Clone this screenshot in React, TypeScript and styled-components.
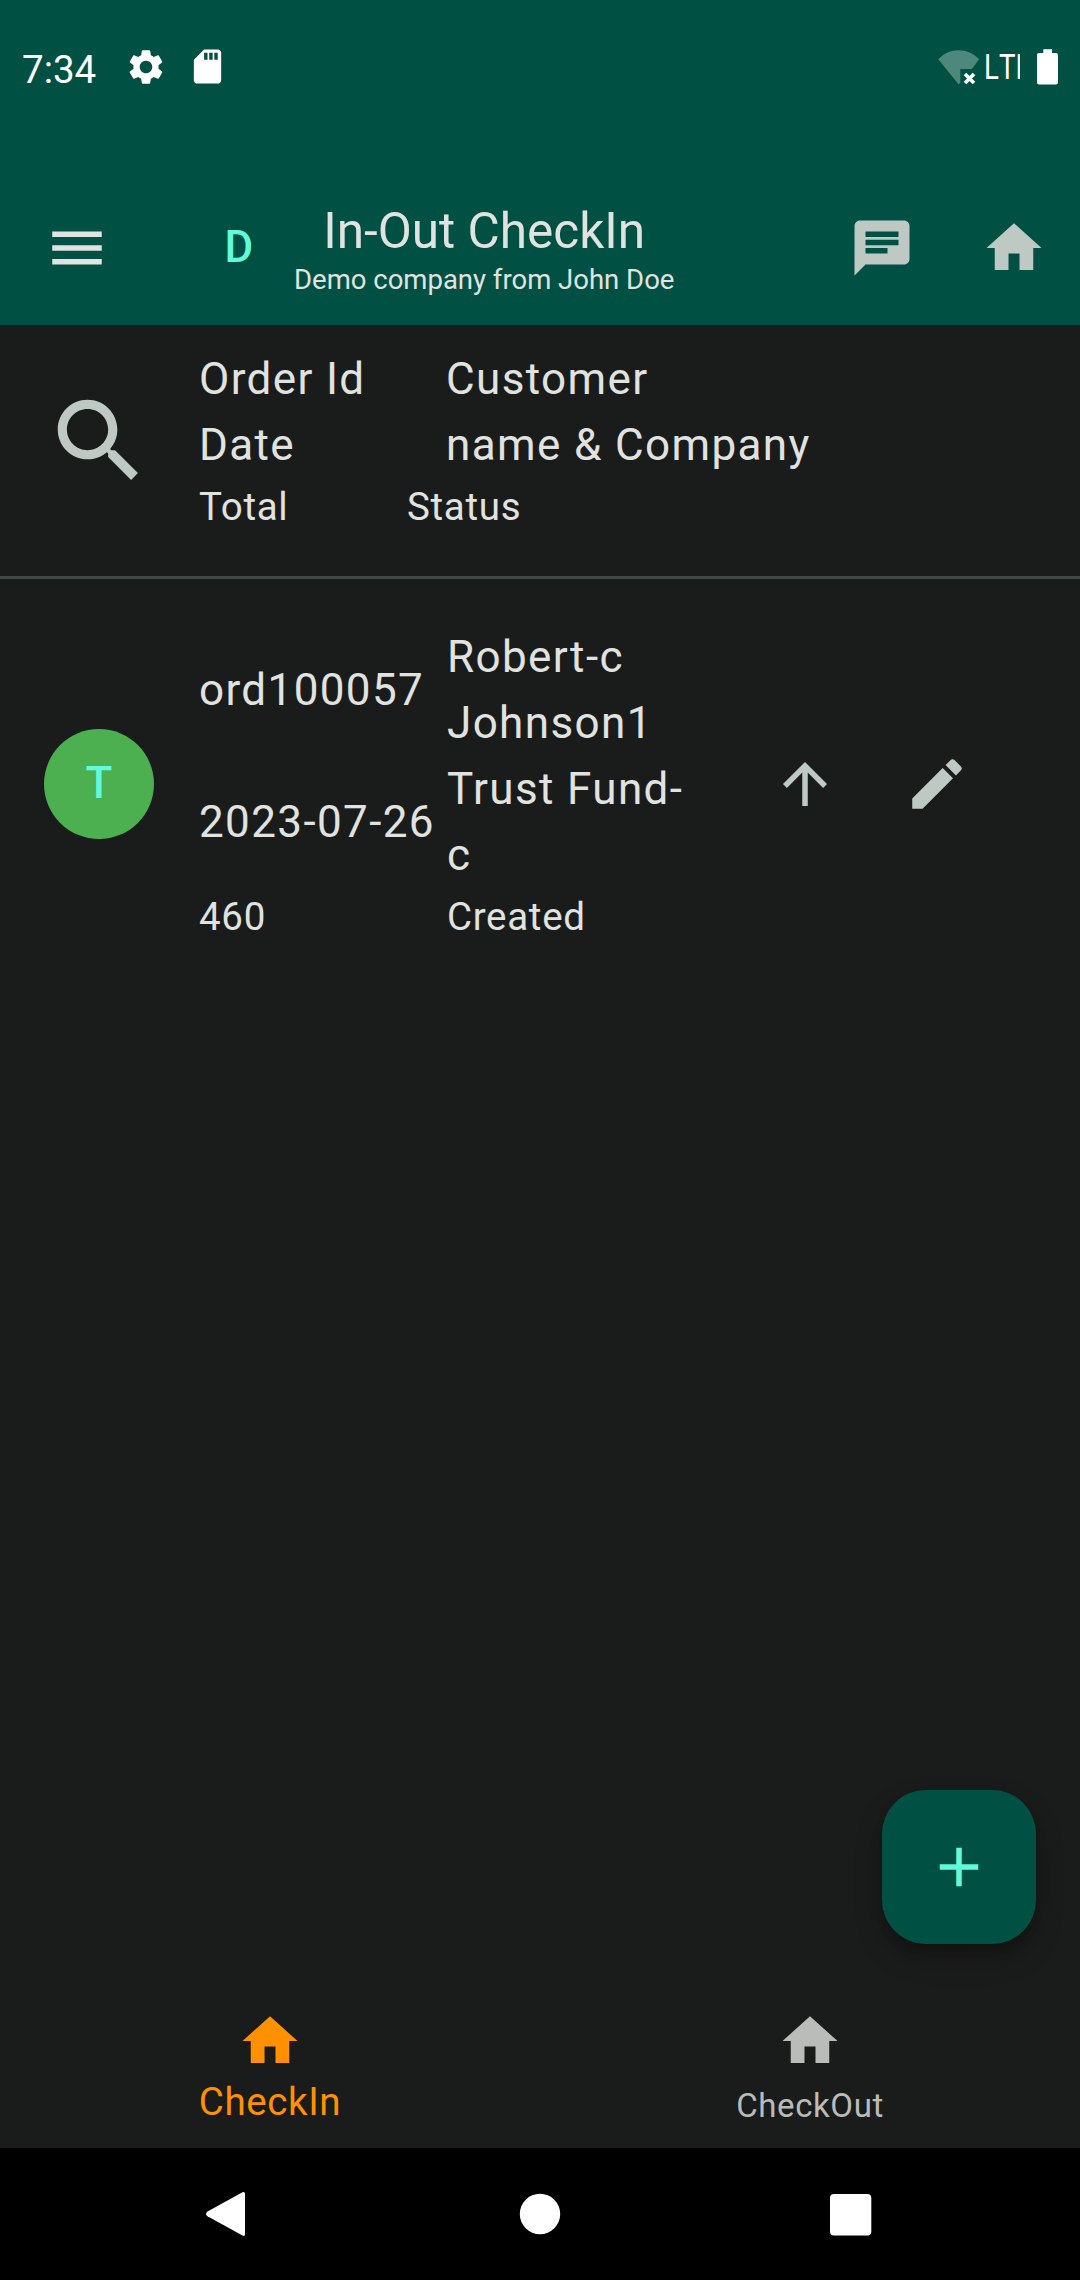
import React from "react";
import styled, { createGlobalStyle } from "styled-components";

const color = {
  header: "#005143",
  surface: "#1a1c1b",
  text: "#e1e3e0",
  icon: "#bfc9c4",
  accent: "#62fbda",
  divider: "#3f4945",
  active: "#ff9100",
  idle: "#babcba",
};

const GlobalStyle = createGlobalStyle`
  * { box-sizing: border-box; }
  body {
    margin: 0;
    background: ${color.surface};
    font-family: Roboto, "Noto Sans", sans-serif;
    color: ${color.text};
  }
`;

const Screen = styled.div`
  width: 1080px;
  height: 2280px;
  display: flex;
  flex-direction: column;
  background: ${color.surface};
  overflow: hidden;
`;

const StatusBar = styled.header`
  flex: none;
  height: 171px;
  padding: 46px 22px 0 22px;
  display: flex;
  align-items: flex-start;
  justify-content: space-between;
  background: ${color.header};
  color: #fff;
`;

const StatusGroup = styled.div`
  display: flex;
  align-items: flex-start;
`;

const Clock = styled.span`
  width: 103px;
  font-size: 38.5px;
  line-height: 48px;
`;

const Icon = styled.svg<{ $size: number }>`
  display: block;
  flex: none;
  width: ${(p) => p.$size}px;
  height: ${(p) => p.$size}px;
  fill: currentColor;
`;

const SdIcon = styled(Icon)`
  margin-left: 20px;
`;

const WifiIcon = styled.svg`
  display: block;
  width: 42px;
  height: 42px;
`;

const Network = styled.span`
  width: 36px;
  height: 44px;
  margin-left: 4px;
  overflow: hidden;
`;

const NetworkText = styled.span`
  display: block;
  font-size: 35px;
  line-height: 44px;
  font-kerning: none;
  transform: scaleX(0.79);
  transform-origin: 0 0;
`;

const BatteryIcon = styled.svg`
  display: block;
  width: 21px;
  height: 42px;
  margin-left: 17px;
`;

const AppBar = styled.nav`
  flex: none;
  height: 154px;
  padding: 0 33px 0 44px;
  display: flex;
  align-items: center;
  background: ${color.header};
`;

const Avatar = styled.div<{ $bg: string }>`
  flex: none;
  width: 110px;
  height: 110px;
  border-radius: 50%;
  display: flex;
  align-items: center;
  justify-content: center;
  background: ${(p) => p.$bg};
  color: ${color.accent};
  font-size: 44px;
  font-weight: 500;
  line-height: 66px;
  letter-spacing: 0.4px;
  padding-bottom: 2px;
`;

const BarAvatar = styled(Avatar)`
  margin-left: 74px;
  padding-bottom: 3px;
`;

const TitleBlock = styled.div`
  display: flex;
  flex-direction: column;
  align-items: center;
  gap: 3px;
  padding-top: 1px;
  white-space: nowrap;
`;

const Title = styled.h1`
  margin: 0;
  font-size: 49.5px;
  font-weight: 400;
  line-height: 58px;
`;

const Subtitle = styled.span`
  font-size: 27.5px;
  line-height: 33px;
`;

const BarActions = styled.div`
  margin-left: auto;
  display: flex;
  gap: 66px;
  color: ${color.icon};
`;

const MenuButton = styled.span`
  color: ${color.text};
`;

const Content = styled.main`
  flex: 1;
  min-height: 0;
  display: flex;
  flex-direction: column;
`;

const HeadRow = styled.section`
  height: 254px;
  padding: 21px 44px 0;
  display: flex;
  gap: 45px;
  border-bottom: 3px solid ${color.divider};
`;

const SearchSlot = styled.div`
  height: 189px;
  display: flex;
  align-items: center;
  color: ${color.icon};
`;

const OrderRow = styled.section`
  height: 410px;
  padding: 0 110px 0 44px;
  display: flex;
  align-items: center;
  gap: 45px;
`;

const Columns = styled.div`
  flex: 1;
`;

const OrderColumns = styled(Columns)`
  padding-top: 1px;
`;

const Line = styled.div`
  display: flex;
  align-items: center;
`;

const Primary = styled.div<{ $width?: number }>`
  flex: none;
  width: ${(p) => (p.$width ? `${p.$width}px` : "auto")};
  font-size: 44px;
  line-height: 66px;
  letter-spacing: 1.375px;
  white-space: pre-line;
`;

const Secondary = styled.div<{ $width?: number }>`
  flex: none;
  width: ${(p) => (p.$width ? `${p.$width}px` : "auto")};
  font-size: 38.5px;
  line-height: 57px;
  letter-spacing: 0.6875px;
`;

const RowActions = styled.div`
  display: flex;
  gap: 66px;
  color: ${color.icon};
`;

const FabHolder = styled.div`
  margin-top: auto;
  padding: 0 44px 50px;
  display: flex;
  justify-content: flex-end;
`;

const Fab = styled.button`
  width: 154px;
  height: 154px;
  padding: 0;
  border: 0;
  border-radius: 44px;
  display: flex;
  align-items: center;
  justify-content: center;
  background: ${color.header};
  color: ${color.accent};
  box-shadow: 0 14px 28px rgba(0, 0, 0, 0.24), 0 4px 10px rgba(0, 0, 0, 0.14);
`;

const Tabs = styled.nav`
  flex: none;
  height: 154px;
  padding-top: 14px;
  display: flex;
`;

const Tab = styled.div<{ $active?: boolean }>`
  flex: 1;
  display: flex;
  flex-direction: column;
  align-items: center;
  color: ${(p) => (p.$active ? color.active : color.idle)};
  font-size: ${(p) => (p.$active ? 38.5 : 33)}px;
  letter-spacing: 0.6px;
  line-height: ${(p) => (p.$active ? 55 : 63)}px;
`;

const SystemNav = styled.footer`
  flex: none;
  height: 132px;
  padding: 0 205px;
  display: flex;
  align-items: center;
  justify-content: space-between;
  background: #000;
`;

const NavGlyph = styled.svg`
  display: block;
  width: 46px;
  height: 46px;
  fill: #fff;
`;

const paths = {
  settings:
    "M19.14 12.94c.04-.3.06-.61.06-.94 0-.32-.02-.64-.07-.94l2.03-1.58c.18-.14.23-.41.12-.61l-1.92-3.32c-.12-.22-.37-.29-.59-.22l-2.39.96c-.5-.38-1.03-.7-1.62-.94l-.36-2.54c-.04-.24-.24-.41-.48-.41h-3.84c-.24 0-.43.17-.47.41l-.36 2.54c-.59.24-1.13.57-1.62.94l-2.39-.96c-.22-.08-.47 0-.59.22L2.74 8.87c-.12.21-.08.47.12.61l2.03 1.58c-.05.3-.09.63-.09.94s.02.64.07.94l-2.03 1.58c-.18.14-.23.41-.12.61l1.92 3.32c.12.22.37.29.59.22l2.39-.96c.5.38 1.03.7 1.62.94l.36 2.54c.05.24.24.41.48.41h3.84c.24 0 .44-.17.47-.41l.36-2.54c.59-.24 1.13-.56 1.62-.94l2.39.96c.22.08.47 0 .59-.22l1.92-3.32c.12-.22.07-.47-.12-.61l-2.01-1.58zM12 15.6c-1.98 0-3.6-1.62-3.6-3.6s1.62-3.6 3.6-3.6 3.6 1.62 3.6 3.6-1.62 3.6-3.6 3.6z",
  sd: "M18 2h-8L4.02 8 4 20c0 1.1.9 2 2 2h12c1.1 0 2-.9 2-2V4c0-1.1-.9-2-2-2zm-6 6h-2V4h2v4zm3 0h-2V4h2v4zm3 0h-2V4h2v4z",
  menu: "M3 18h18v-2H3v2zm0-5h18v-2H3v2zm0-7v2h18V6H3z",
  chat: "M20 2H4c-1.1 0-1.99.9-1.99 2L2 22l4-4h14c1.1 0 2-.9 2-2V4c0-1.1-.9-2-2-2zM6 9h12v2H6V9zm8 5H6v-2h8v2zm4-6H6V6h12v2z",
  home: "M10 20v-6h4v6h5v-8h3L12 3 2 12h3v8z",
  search:
    "M15.5 14h-.79l-.28-.27C15.41 12.59 16 11.11 16 9.5 16 5.91 13.09 3 9.5 3S3 5.91 3 9.5 5.91 16 9.5 16c1.61 0 3.09-.59 4.23-1.57l.27.28v.79l5 4.99L20.49 19l-4.99-5zm-6 0C7.01 14 5 11.99 5 9.5S7.01 5 9.5 5 14 7.01 14 9.5 11.99 14 9.5 14z",
  up: "M4 12l1.41 1.41L11 7.83V20h2V7.83l5.58 5.59L20 12l-8-8-8 8z",
  edit: "M3 17.25V21h3.75L17.81 9.94l-3.75-3.75L3 17.25zM20.71 7.04c.39-.39.39-1.02 0-1.41l-2.34-2.34c-.39-.39-1.02-.39-1.41 0l-1.83 1.83 3.75 3.75 1.83-1.83z",
  add: "M19 13h-6v6h-2v-6H5v-2h6V5h2v6h6v2z",
};

const Glyph = ({ name, size = 66 }: { name: keyof typeof paths; size?: number }) => (
  <Icon $size={size} viewBox="0 0 24 24" aria-hidden="true">
    <path d={paths[name]} />
  </Icon>
);

export default function App() {
  return (
    <>
      <GlobalStyle />
      <Screen>
        <StatusBar>
          <StatusGroup>
            <Clock>7:34</Clock>
            <Glyph name="settings" size={42} />
            <SdIcon $size={41} viewBox="0 0 24 24">
              <path d={paths.sd} />
            </SdIcon>
          </StatusGroup>
          <StatusGroup>
            <WifiIcon viewBox="0 0 42 42">
              <path
                d="M20.700 38.500 0.300 13.200C6.100 7.200 13 4.200 20.700 4.200S35.300 7.200 41.100 13.200L34 22.900H22.300V36.500Z"
                fill="#4e877c"
              />
              <path d="M27 28l9 9M36 28l-9 9" stroke="#fff" strokeWidth="3.600" />
            </WifiIcon>
            <Network>
              <NetworkText>LTE</NetworkText>
            </Network>
            <BatteryIcon viewBox="0 0 21 42">
              <path
                d="M6.300 3.300H15V7H19a2 2 0 0 1 2 2V36.500a2 2 0 0 1-2 2H2a2 2 0 0 1-2-2V9a2 2 0 0 1 2-2H6.300Z"
                fill="#fff"
              />
            </BatteryIcon>
          </StatusGroup>
        </StatusBar>

        <AppBar>
          <MenuButton>
            <Glyph name="menu" />
          </MenuButton>
          <BarAvatar $bg="transparent">D</BarAvatar>
          <TitleBlock>
            <Title>In-Out CheckIn</Title>
            <Subtitle>Demo company from John Doe</Subtitle>
          </TitleBlock>
          <BarActions>
            <Glyph name="chat" />
            <Glyph name="home" />
          </BarActions>
        </AppBar>

        <Content>
          <HeadRow>
            <SearchSlot>
              <Glyph name="search" size={110} />
            </SearchSlot>
            <Columns>
              <Line>
                <Primary $width={247}>{"Order Id\nDate"}</Primary>
                <Primary>{"Customer\nname & Company"}</Primary>
              </Line>
              <Line>
                <Secondary $width={208}>Total</Secondary>
                <Secondary>Status</Secondary>
              </Line>
            </Columns>
          </HeadRow>

          <OrderRow>
            <Avatar $bg="#4caf50">T</Avatar>
            <OrderColumns>
              <Line>
                <Primary $width={248}>{"ord100057\n\n2023-07-26"}</Primary>
                <Primary $width={248}>{"Robert-c\nJohnson1\nTrust Fund-\nc"}</Primary>
              </Line>
              <Line>
                <Secondary $width={248}>460</Secondary>
                <Secondary>Created</Secondary>
              </Line>
            </OrderColumns>
            <RowActions>
              <Glyph name="up" />
              <Glyph name="edit" />
            </RowActions>
          </OrderRow>

          <FabHolder>
            <Fab aria-label="Add">
              <Glyph name="add" />
            </Fab>
          </FabHolder>
        </Content>

        <Tabs>
          <Tab $active>
            <Glyph name="home" />
            CheckIn
          </Tab>
          <Tab>
            <Glyph name="home" />
            CheckOut
          </Tab>
        </Tabs>

        <SystemNav>
          <NavGlyph viewBox="0 0 46 46">
            <path d="M37.500 1.200Q40 .2 40 3V43Q40 45.800 37.500 44.600L2.500 25.200Q-.5 22.900 2.500 20.600Z" />
          </NavGlyph>
          <NavGlyph viewBox="0 0 46 46">
            <circle cx="23" cy="23" r="20.200" />
          </NavGlyph>
          <NavGlyph viewBox="0 0 46 46">
            <rect x="1" y="3" width="41.300" height="41.500" rx="4" />
          </NavGlyph>
        </SystemNav>
      </Screen>
    </>
  );
}
